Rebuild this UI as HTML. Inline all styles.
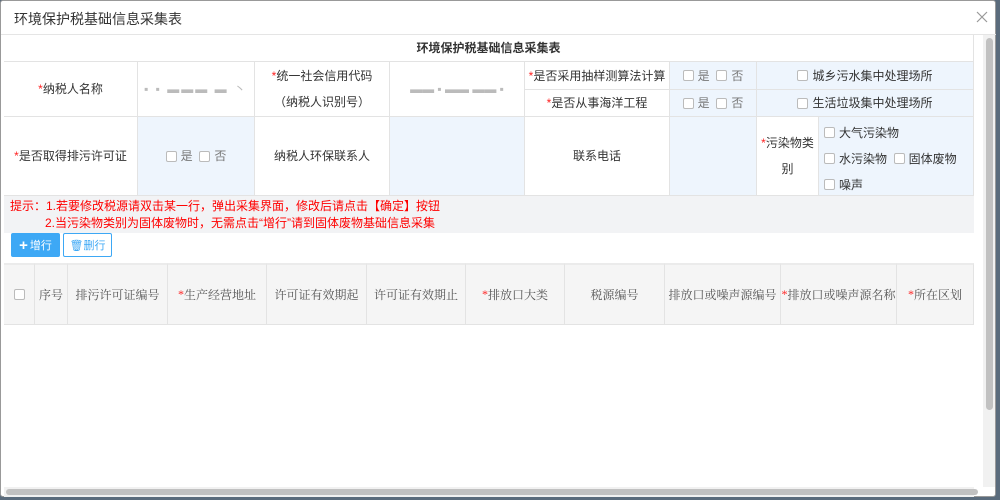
<!DOCTYPE html>
<html><head><meta charset="utf-8"><style>
*{box-sizing:border-box;margin:0;padding:0}
body{width:1000px;height:500px;overflow:hidden;background:#5a6b7c;font-family:"Liberation Sans","Noto Sans CJK SC",sans-serif;position:relative;font-size:12px;color:#333}
.dlg{position:absolute;left:0;top:0;width:996px;height:497px;background:#fff;border:1px solid #999;border-radius:3px}
.ttl{position:absolute;left:13px;top:8px;font-size:14px;color:#333}
.hl{position:absolute;left:0;top:33px;width:995px;height:1px;background:#e5e5e5}
.a{position:absolute;display:flex;align-items:center;justify-content:center;text-align:center;line-height:26px}
.b{border-right:1px solid #e3e3e3;border-bottom:1px solid #e3e3e3}
.blue{background:#eef5fd}
.r{color:#f22}
.cb{display:inline-block;width:11px;height:11px;border:1px solid #bbb;border-radius:2px;background:#fff;vertical-align:-1px;margin-right:4px}
.hint{position:absolute;left:3px;top:195px;width:970px;height:37px;background:#f2f3f5;color:#f00;font-size:12px;line-height:17px;padding:2px 0 0 6px}
.btn{position:absolute;top:232px;height:24px;font-size:11px;display:flex;align-items:center;justify-content:center;border-radius:2px}
.gh{position:absolute;top:262px;height:62px;background:#f5f5f5;border-bottom:1px solid #e3e3e3;border-right:1px solid #e3e3e3;border-top:2px solid #ebebeb;display:flex;align-items:center;justify-content:center;color:#555;font-size:12px;font-family:"Liberation Serif","Noto Serif CJK SC",serif}
</style></head><body>
<div class="dlg">
<div class="ttl">环境保护税基础信息采集表</div>
<svg style="position:absolute;left:975px;top:10px" width="12" height="12" viewBox="0 0 12 12"><path d="M1 1L11 11M11 1L1 11" stroke="#999" stroke-width="1.2"/></svg>
<div class="hl"></div>
<div style="position:absolute;left:982px;top:34px;width:12px;height:452px;background:#f1f1f1"></div>
<div style="position:absolute;left:985px;top:37px;width:7px;height:372px;background:#c1c1c1;border-radius:4px"></div>
<div class="a b" style="left:3px;top:34px;width:970px;height:27px;font-weight:bold">环境保护税基础信息采集表</div>
<div class="a b" style="left:3px;top:61px;width:134px;height:55px"><span class="r">*</span>纳税人名称</div>
<div class="a b" style="left:137px;top:61px;width:117px;height:55px;color:#bbb;letter-spacing:2px">▪ ▪ ▬▬▬ ▬ 丶</div>
<div class="a b" style="left:254px;top:61px;width:135px;height:55px"><div><span class="r">*</span>统一社会信用代码<br>（纳税人识别号）</div></div>
<div class="a b" style="left:389px;top:61px;width:135px;height:55px;color:#bbb">▬▬ ▪ ▬▬ ▬▬ ▪</div>
<div class="a b" style="left:524px;top:61px;width:145px;height:28px"><span class="r">*</span>是否采用抽样测算法计算</div>
<div class="a b blue" style="left:669px;top:61px;width:87px;height:28px;color:#777"><span class="cb"></span>是&nbsp;&nbsp;<span class="cb"></span>否</div>
<div class="a b blue" style="left:756px;top:61px;width:217px;height:28px"><span class="cb"></span>城乡污水集中处理场所</div>
<div class="a b" style="left:524px;top:89px;width:145px;height:27px"><span class="r">*</span>是否从事海洋工程</div>
<div class="a b blue" style="left:669px;top:89px;width:87px;height:27px;color:#777"><span class="cb"></span>是&nbsp;&nbsp;<span class="cb"></span>否</div>
<div class="a b blue" style="left:756px;top:89px;width:217px;height:27px"><span class="cb"></span>生活垃圾集中处理场所</div>
<div class="a b" style="left:3px;top:116px;width:134px;height:79px"><span class="r">*</span>是否取得排污许可证</div>
<div class="a b blue" style="left:137px;top:116px;width:117px;height:79px;color:#777"><span class="cb"></span>是&nbsp;&nbsp;<span class="cb"></span>否</div>
<div class="a b" style="left:254px;top:116px;width:135px;height:79px">纳税人环保联系人</div>
<div class="a b blue" style="left:389px;top:116px;width:135px;height:79px"></div>
<div class="a b" style="left:524px;top:116px;width:145px;height:79px">联系电话</div>
<div class="a b blue" style="left:669px;top:116px;width:87px;height:79px"></div>
<div class="a b" style="left:756px;top:116px;width:62px;height:79px"><div><span class="r">*</span>污染物类<br>别</div></div>
<div class="b blue" style="position:absolute;left:818px;top:116px;width:155px;height:79px;padding:3px 0 0 5px;line-height:26px"><span class="cb"></span>大气污染物<br><span class="cb"></span>水污染物 &nbsp;<span class="cb"></span>固体废物<br><span class="cb"></span>噪声</div>
<div class="hint">提示：1.若要修改税源请双击某一行，弹出采集界面，修改后请点击【确定】按钮<br><span style="padding-left:35px">2.当污染物类别为固体废物时，无需点击“增行”请到固体废物基础信息采集</span></div>
<div class="btn" style="left:10px;width:49px;background:#3da8f5;color:#fff"><b style="font-size:15px;margin-right:2px">+</b>增行</div>
<div class="btn" style="left:62px;width:49px;border:1px solid #3da8f5;color:#3da8f5;background:#fff">🗑删行</div>
<div class="gh" style="left:3px;width:31px"><span class="cb" style="margin:0"></span></div>
<div class="gh" style="left:34px;width:33px">序号</div>
<div class="gh" style="left:67px;width:100px">排污许可证编号</div>
<div class="gh" style="left:167px;width:99px"><span class="r">*</span>生产经营地址</div>
<div class="gh" style="left:266px;width:100px">许可证有效期起</div>
<div class="gh" style="left:366px;width:99px">许可证有效期止</div>
<div class="gh" style="left:465px;width:99px"><span class="r">*</span>排放口大类</div>
<div class="gh" style="left:564px;width:100px">税源编号</div>
<div class="gh" style="left:664px;width:116px">排放口或噪声源编号</div>
<div class="gh" style="left:780px;width:116px"><span class="r">*</span>排放口或噪声源名称</div>
<div class="gh" style="left:896px;width:77px"><span class="r">*</span>所在区划</div>
<div style="position:absolute;left:3px;top:486px;width:970px;height:10px;background:#f1f1f1"></div>
<div style="position:absolute;left:5px;top:488px;width:972px;height:6px;background:#c1c1c1;border-radius:3px"></div>
</div>
</body></html>
